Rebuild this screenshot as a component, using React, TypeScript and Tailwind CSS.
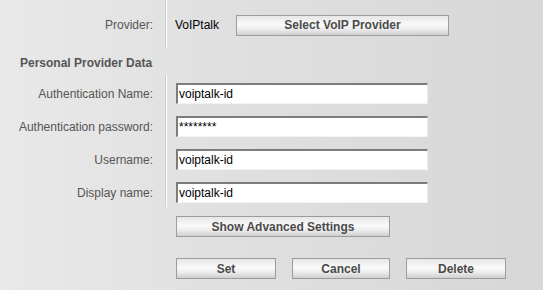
import React from 'react'

const font = { fontFamily: '"Liberation Sans", Arial, sans-serif' }

function Btn({ label, className }: { label: string; className: string }) {
  return (
    <button
      className={`block h-[21px] border border-[#9c9c9c] bg-[linear-gradient(to_bottom,#e6e6e6_0%,#fafafa_45%,#ececec_70%,#cfcfcf_100%)] text-[12px] font-bold text-[#4a4a4a] leading-none ${className}`}
    >
      {label}
    </button>
  )
}

function Field({ label, value }: { label: string; value: string }) {
  return (
    <div className="flex h-[21px] items-center">
      <div className="w-[153px] text-right text-[12px] text-[#555555]">{label}</div>
      <div className="ml-[23px] flex h-[21px] w-[252px] items-center border-t-2 border-l-2 border-r border-b border-t-[#7c7c7c] border-l-[#7c7c7c] border-r-[#ececec] border-b-[#f4f4f4] bg-white pl-px text-[12px] text-black">
        {value}
      </div>
    </div>
  )
}

function Divider() {
  return <div className="absolute top-0 bottom-0 left-[165px] w-[2px] border-l border-l-[#cdcdcd] bg-white" />
}

export default function App() {
  return (
    <div
      style={font}
      className="relative h-[290px] w-[543px] overflow-hidden bg-[linear-gradient(to_right,#e9e9e9_0%,#e0e0e0_40%,#d7d7d7_100%)]"
    >
      {/* Provider row */}
      <div className="relative flex h-[48px] items-center pt-[2px]">
        <Divider />
        <div className="w-[153px] text-right text-[12px] text-[#555555]">Provider:</div>
        <span className="ml-[22px] w-[61px] text-[12px] text-black">VoIPtalk</span>
        <Btn label="Select VoIP Provider" className="w-[213px]" />
      </div>

      {/* Section heading */}
      <div className="flex h-[27px] items-center pl-[20px] pt-[3px] text-[12px] font-bold text-[#555555]">
        Personal Provider Data
      </div>

      {/* Fields */}
      <div className="relative flex flex-col gap-[12px] pb-[4px] pt-[8px]">
        <Divider />
        <Field label="Authentication Name:" value="voiptalk-id" />
        <Field label="Authentication password:" value="********" />
        <Field label="Username:" value="voiptalk-id" />
        <Field label="Display name:" value="voiptalk-id" />
      </div>

      <div className="flex pl-[176px] pt-[9px]">
        <Btn label="Show Advanced Settings" className="w-[214px]" />
      </div>

      <div className="flex gap-[16px] pl-[176px] pt-[21px]">
        <Btn label="Set" className="w-[100px]" />
        <Btn label="Cancel" className="w-[98px]" />
        <Btn label="Delete" className="w-[100px]" />
      </div>
    </div>
  )
}
